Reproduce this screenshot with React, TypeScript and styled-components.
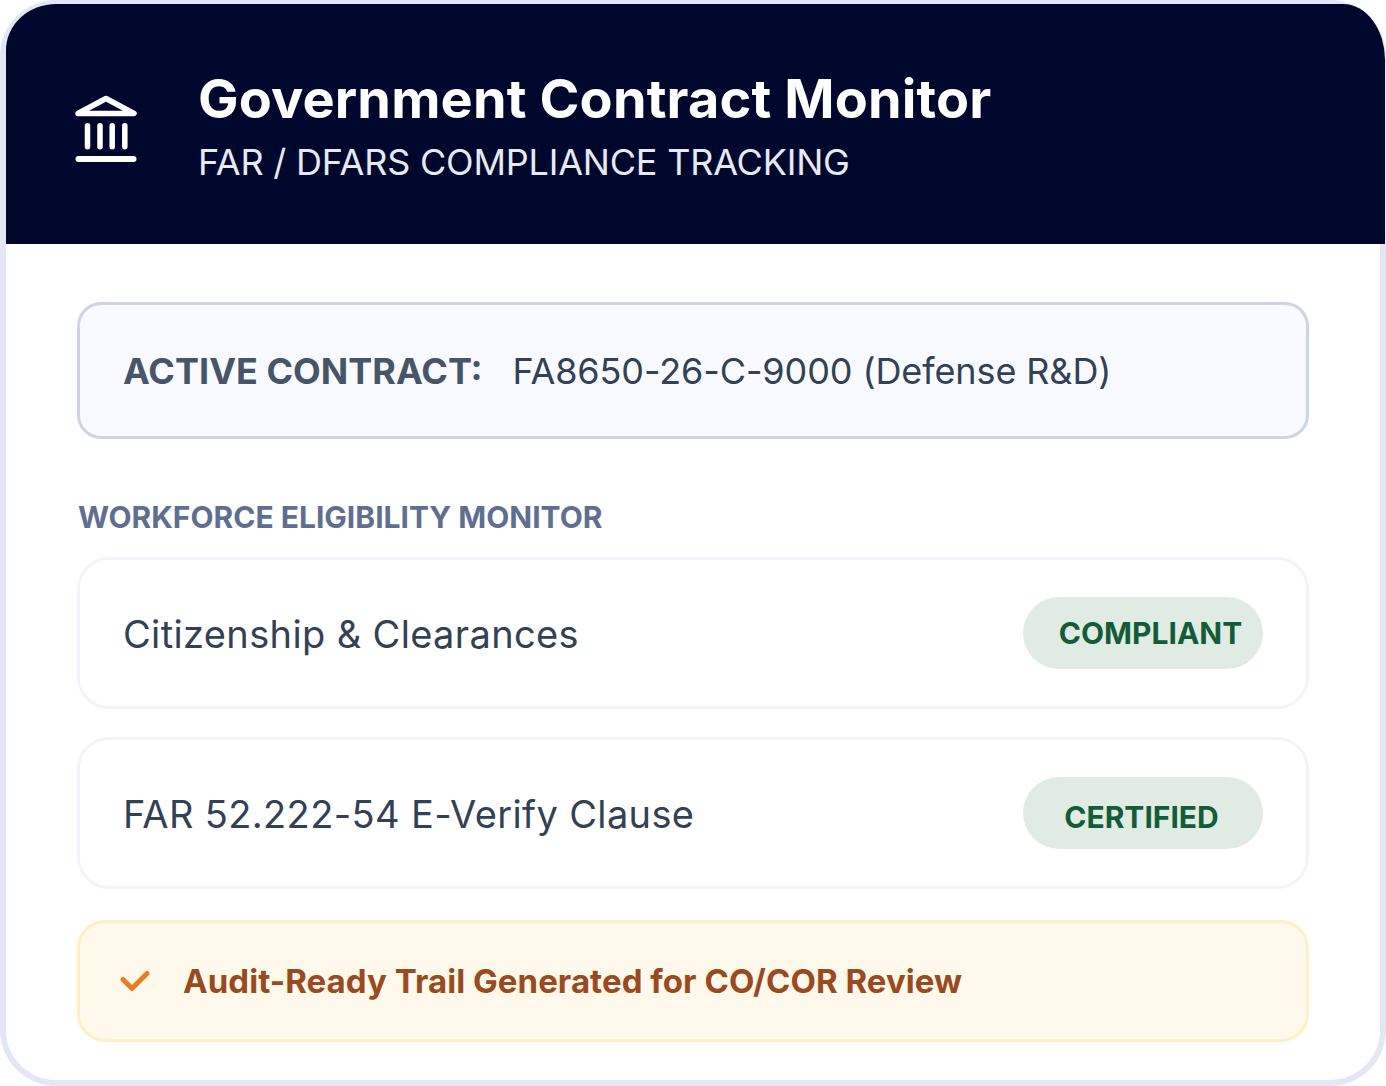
import React from 'react';
import styled, { createGlobalStyle } from 'styled-components';

const GlobalStyle = createGlobalStyle`
  html, body {
    margin: 0;
    padding: 0;
    background: #ffffff;
  }
  * {
    box-sizing: border-box;
  }
`;

const Card = styled.div`
  width: 1386px;
  height: 1086px;
  background: #ffffff;
  border: solid #e3e7f4;
  border-width: 4px 6px 6px;
  border-radius: 56px;
  font-family: Inter, "Liberation Sans", sans-serif;
`;

const Header = styled.header`
  height: 240px;
  margin-right: -5px;
  background: #00072d;
  border-radius: 50px 42px 0 0 / 46px 56px 0 0;
  display: flex;
  align-items: center;
  padding: 4px 0 0 68.5px;
  gap: 61.5px;
`;

const HeaderIcon = styled.svg`
  margin-top: 6px;
  flex-shrink: 0;
`;

const TitleBlock = styled.div`
  display: flex;
  flex-direction: column;
  gap: 10px;
`;

const Title = styled.h1`
  margin: 0;
  font-size: 54px;
  line-height: 62px;
  font-weight: 700;
  letter-spacing: 0.15px;
  color: #ffffff;
`;

const Subtitle = styled.div`
  font-size: 36px;
  line-height: 44px;
  font-weight: 400;
  letter-spacing: -0.2px;
  color: #e6e9f2;
`;

const Body = styled.main`
  padding: 58px 71px 0;
  display: flex;
  flex-direction: column;
`;

const ContractBox = styled.div`
  height: 137px;
  background: #f8faff;
  border: 3px solid #cdd4e4;
  border-radius: 24px;
  display: flex;
  align-items: center;
  gap: 30px;
  padding: 0 43px;
  font-size: 36px;
`;

const ContractLabel = styled.span`
  font-weight: 700;
  color: #475569;
`;

const ContractValue = styled.span`
  font-weight: 400;
  letter-spacing: -0.1px;
  color: #334155;
`;

const SectionLabel = styled.div`
  margin: 59px 0 21px 1px;
  font-size: 30px;
  line-height: 38px;
  font-weight: 700;
  color: #5f6f90;
`;

const RowList = styled.div`
  display: flex;
  flex-direction: column;
  gap: 28px;
`;

const Row = styled.div`
  height: 152px;
  background: #ffffff;
  border: 3px solid #f2f4fb;
  border-radius: 32px;
  display: flex;
  align-items: center;
  justify-content: space-between;
  padding: 0 43px;
`;

const RowLabel = styled.span`
  margin-top: 2px;
  font-size: 38px;
  font-weight: 400;
  letter-spacing: 0.36px;
  color: #334155;
`;

const Badge = styled.span<{ $shiftX: number; $shiftY: number }>`
  width: 240px;
  height: 72px;
  border-radius: 36px;
  background: #e0ece3;
  color: #145c38;
  font-size: 30px;
  font-weight: 700;
  display: flex;
  align-items: center;
  justify-content: center;
  padding-top: ${props => props.$shiftY}px;
  text-indent: ${props => props.$shiftX}px;
`;

const AuditBar = styled.div`
  margin-top: 31px;
  height: 122px;
  background: #fff9ec;
  border: 3px solid #fef0c4;
  border-radius: 28px;
  display: flex;
  align-items: center;
  gap: 33px;
  padding: 0 40px;
`;

const AuditText = styled.span`
  font-size: 33px;
  font-weight: 700;
  letter-spacing: 0.05px;
  color: #9a4a20;
`;

function BankIcon() {
  return (
    <HeaderIcon width="62" height="68" viewBox="0 0 62 68" fill="none" stroke="#ffffff" strokeLinecap="round" strokeLinejoin="round">
      <path d="M3 18.5 L31 3.5 L59 18.5 Z" strokeWidth="5.5" />
      <path d="M12.5 30.7 V51.8 M25 30.7 V51.8 M37.2 30.7 V51.8 M49.8 30.7 V51.8" strokeWidth="5.5" />
      <path d="M3.5 64 H58.5" strokeWidth="6" />
    </HeaderIcon>
  );
}

function CheckIcon() {
  return (
    <svg width="30" height="22" viewBox="0 0 30 22" fill="none" stroke="#e67e22" strokeWidth="5" strokeLinecap="round" strokeLinejoin="round">
      <path d="M3 9.5 L12 18.5 L27 3.5" />
    </svg>
  );
}

export default function App() {
  return (
    <>
      <GlobalStyle />
      <Card>
        <Header>
          <BankIcon />
          <TitleBlock>
            <Title>Government Contract Monitor</Title>
            <Subtitle>FAR / DFARS COMPLIANCE TRACKING</Subtitle>
          </TitleBlock>
        </Header>
        <Body>
          <ContractBox>
            <ContractLabel>ACTIVE CONTRACT:</ContractLabel>
            <ContractValue>FA8650-26-C-9000 (Defense R&amp;D)</ContractValue>
          </ContractBox>
          <SectionLabel>WORKFORCE ELIGIBILITY MONITOR</SectionLabel>
          <RowList>
            <Row>
              <RowLabel>Citizenship &amp; Clearances</RowLabel>
              <Badge $shiftX={15} $shiftY={0}>COMPLIANT</Badge>
            </Row>
            <Row>
              <RowLabel>FAR 52.222-54 E-Verify Clause</RowLabel>
              <Badge $shiftX={-3} $shiftY={7}>CERTIFIED</Badge>
            </Row>
          </RowList>
          <AuditBar>
            <CheckIcon />
            <AuditText>Audit-Ready Trail Generated for CO/COR Review</AuditText>
          </AuditBar>
        </Body>
      </Card>
    </>
  );
}
